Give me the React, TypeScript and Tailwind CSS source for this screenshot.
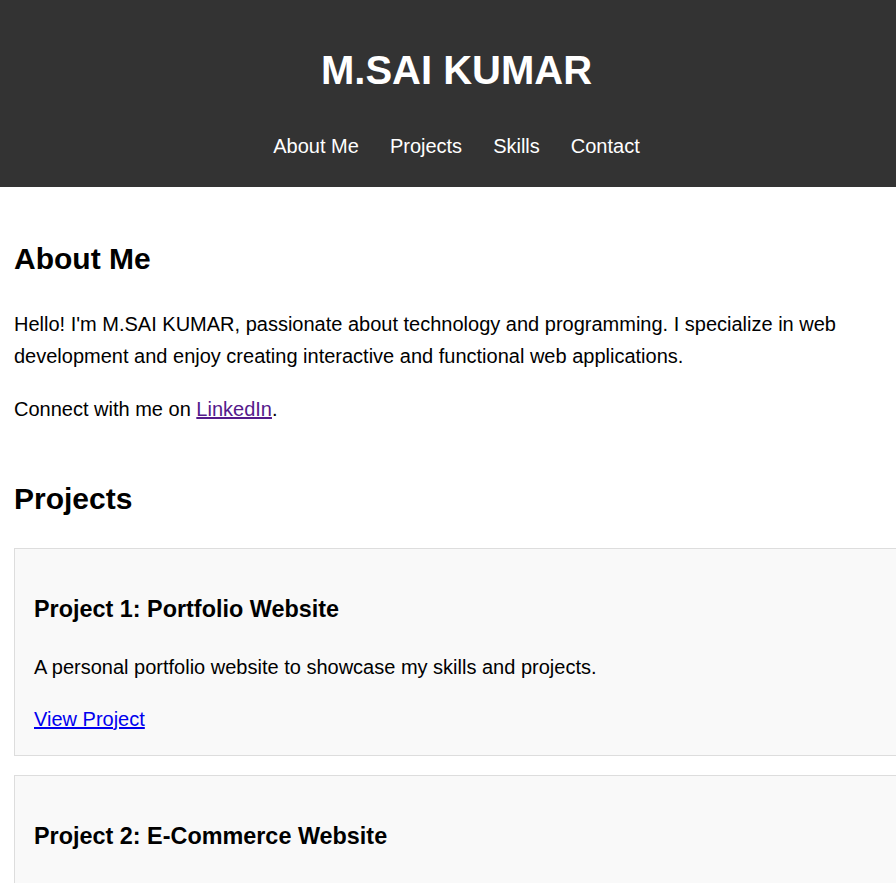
export default function App() {
  const navItems = ["About Me", "Projects", "Skills", "Contact"];
  return (
    <div className="w-full overflow-hidden bg-white text-black font-['Liberation_Sans',Arial,sans-serif]">
      <header className="bg-[#333333] text-white h-[187px] pt-[38px] pl-[17px] text-center">
        <h1 className="text-[40px] leading-[64px] font-bold">M.SAI KUMAR</h1>
        <nav className="mt-[28px] flex justify-center gap-[31px] text-[20px] leading-[32px]">
          {navItems.map((n) => (
            <a key={n} href="#" className="text-white no-underline">
              {n}
            </a>
          ))}
        </nav>
      </header>
      <main className="px-[14px]">
        <section>
          <h2 className="mt-[48px] text-[30px] leading-[48px] font-bold">About Me</h2>
          <p className="mt-[25px] text-[20px] leading-[32px]">
            Hello! I'm M.SAI KUMAR, passionate about technology and programming. I specialize in web development and enjoy creating interactive and functional web applications.
          </p>
          <p className="mt-[21px] text-[20px] leading-[32px]">
            Connect with me on{" "}
            <a href="#" className="text-[#551a8b] underline">
              LinkedIn
            </a>
            .
          </p>
        </section>
        <section>
          <h2 className="mt-[50px] text-[30px] leading-[48px] font-bold">Projects</h2>
          <div className="mt-[25px] w-[calc(100%+42px)] border border-[#dddddd] bg-[#f9f9f9] px-[19px] pt-[20px] pb-[20px]">
            <h3 className="mt-[22px] text-[23.4px] leading-[37px] font-bold">Project 1: Portfolio Website</h3>
            <p className="mt-[23px] text-[20px] leading-[32px]">
              A personal portfolio website to showcase my skills and projects.
            </p>
            <a href="#" className="mt-[20px] block w-fit text-[20px] leading-[32px] text-[#0000ee] underline">
              View Project
            </a>
          </div>
          <div className="mt-[19px] w-[calc(100%+42px)] border border-[#dddddd] bg-[#f9f9f9] px-[19px] pt-[20px] pb-[20px]">
            <h3 className="mt-[22px] text-[23.4px] leading-[37px] font-bold">Project 2: E-Commerce Website</h3>
            <p className="mt-[23px] text-[20px] leading-[32px]">
              An online shopping platform with product listings, cart and checkout features.
            </p>
            <a href="#" className="mt-[20px] block w-fit text-[20px] leading-[32px] text-[#0000ee] underline">
              View Project
            </a>
          </div>
        </section>
      </main>
    </div>
  );
}
